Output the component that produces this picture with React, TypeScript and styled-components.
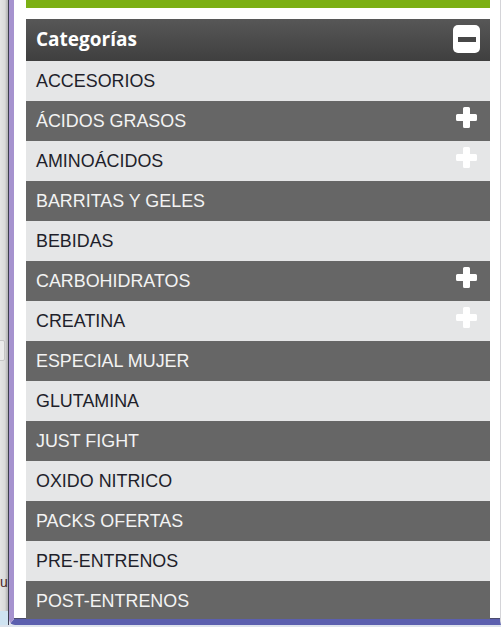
import React from 'react';
import styled, { createGlobalStyle } from 'styled-components';

const GlobalStyle = createGlobalStyle`
  html, body {
    margin: 0;
    padding: 0;
    background: #dfe4ec;
  }
  * {
    box-sizing: border-box;
  }
`;

const Desktop = styled.div`
  width: 501px;
  height: 627px;
  display: flex;
  flex-direction: column;
  background: #dde3ec;
  overflow: hidden;
`;

const WindowRow = styled.div`
  height: 625px;
  display: flex;
`;

const SideStrip = styled.div`
  width: 9px;
  display: flex;
  flex-direction: column;
  background: linear-gradient(to right, #e4e4e4 0, #dadada 5px, #b9b9b9 7px, #b9b9b9 8px);
  border-right: 1px solid #3e3e50;
  overflow: hidden;
`;

const StripBox = styled.div`
  margin-top: 340px;
  margin-left: -4px;
  width: 9px;
  height: 21px;
  border: 1px solid #c6c6c6;
  border-radius: 2px;
  background: #ececec;
`;

const StripText = styled.span`
  margin-top: 214px;
  font-family: 'Liberation Sans', Arial, sans-serif;
  font-size: 14px;
  line-height: 14px;
  color: #4a2626;
`;

const StripGlow = styled.div`
  margin-top: auto;
  height: 14px;
  background: #cfe3f1;
`;

const Frame = styled.div`
  flex: 1;
  background: #ffffff;
  border-left: 5px solid #a693cf;
  border-bottom: 6px solid #5b5fae;
  border-right: 1px solid #d4d4d8;
  border-bottom-left-radius: 6px;
  box-shadow: inset 0 -1px 0 #4c4c6c;
  padding: 0 10px 0 12px;
  overflow: hidden;
`;

const Panel = styled.nav`
  display: flex;
  flex-direction: column;
`;

const GreenBar = styled.div`
  height: 8px;
  background: #7cb014;
  margin-bottom: 11px;
`;

const Header = styled.div`
  height: 42px;
  display: flex;
  align-items: center;
  justify-content: space-between;
  padding: 0 10px 0 10px;
  background: linear-gradient(to bottom, #575757, #3f3f3f);
`;

const HeaderTitle = styled.h2`
  margin: 0;
  font-family: 'Open Sans', 'Liberation Sans', sans-serif;
  font-weight: 700;
  font-size: 19px;
  color: #ffffff;
  margin-top: -2px;
`;

const CollapseBox = styled.span`
  width: 27px;
  height: 28px;
  border-radius: 5px;
  background: #ffffff;
  display: flex;
  align-items: center;
  justify-content: center;
  margin-top: -2px;
`;

const CollapseBar = styled.span`
  width: 18px;
  height: 5px;
  background: #474747;
`;

const Row = styled.a<{ $dark: boolean }>`
  height: 40px;
  display: flex;
  align-items: center;
  justify-content: space-between;
  padding: 0 13px 0 10px;
  background: ${p => (p.$dark ? '#666666' : '#e5e6e7')};
  color: ${p => (p.$dark ? '#f3f3f3' : '#1f1f2b')};
  font-family: 'Liberation Sans', Arial, sans-serif;
  font-size: 17.9px;
  text-decoration: none;
  cursor: pointer;
`;

const PlusIcon = styled.svg`
  width: 21px;
  height: 21px;
  margin-top: -7px;
  flex-shrink: 0;
`;

const categories = [
  { label: 'ACCESORIOS', expandable: false },
  { label: 'ÁCIDOS GRASOS', expandable: true },
  { label: 'AMINOÁCIDOS', expandable: true },
  { label: 'BARRITAS Y GELES', expandable: false },
  { label: 'BEBIDAS', expandable: false },
  { label: 'CARBOHIDRATOS', expandable: true },
  { label: 'CREATINA', expandable: true },
  { label: 'ESPECIAL MUJER', expandable: false },
  { label: 'GLUTAMINA', expandable: false },
  { label: 'JUST FIGHT', expandable: false },
  { label: 'OXIDO NITRICO', expandable: false },
  { label: 'PACKS OFERTAS', expandable: false },
  { label: 'PRE-ENTRENOS', expandable: false },
  { label: 'POST-ENTRENOS', expandable: false },
];

const Plus: React.FC = () => (
  <PlusIcon viewBox="0 0 21 21" aria-hidden="true">
    <path d="M7 1.5 Q7 0 8.5 0 H12.5 Q14 0 14 1.5 V7 H19.5 Q21 7 21 8.5 V12.5 Q21 14 19.5 14 H14 V19.5 Q14 21 12.5 21 H8.5 Q7 21 7 19.5 V14 H1.5 Q0 14 0 12.5 V8.5 Q0 7 1.5 7 H7 Z" fill="#ffffff" />
  </PlusIcon>
);

const App: React.FC = () => (
  <>
    <GlobalStyle />
    <Desktop>
      <WindowRow>
        <SideStrip>
          <StripBox />
          <StripText>u</StripText>
          <StripGlow />
        </SideStrip>
        <Frame>
          <Panel>
            <GreenBar />
            <Header>
              <HeaderTitle>Categorías</HeaderTitle>
              <CollapseBox aria-label="Contraer">
                <CollapseBar />
              </CollapseBox>
            </Header>
            {categories.map((c, i) => (
              <Row key={c.label} $dark={i % 2 === 1}>
                <span>{c.label}</span>
                {c.expandable && <Plus />}
              </Row>
            ))}
          </Panel>
        </Frame>
      </WindowRow>
    </Desktop>
  </>
);

export default App;
